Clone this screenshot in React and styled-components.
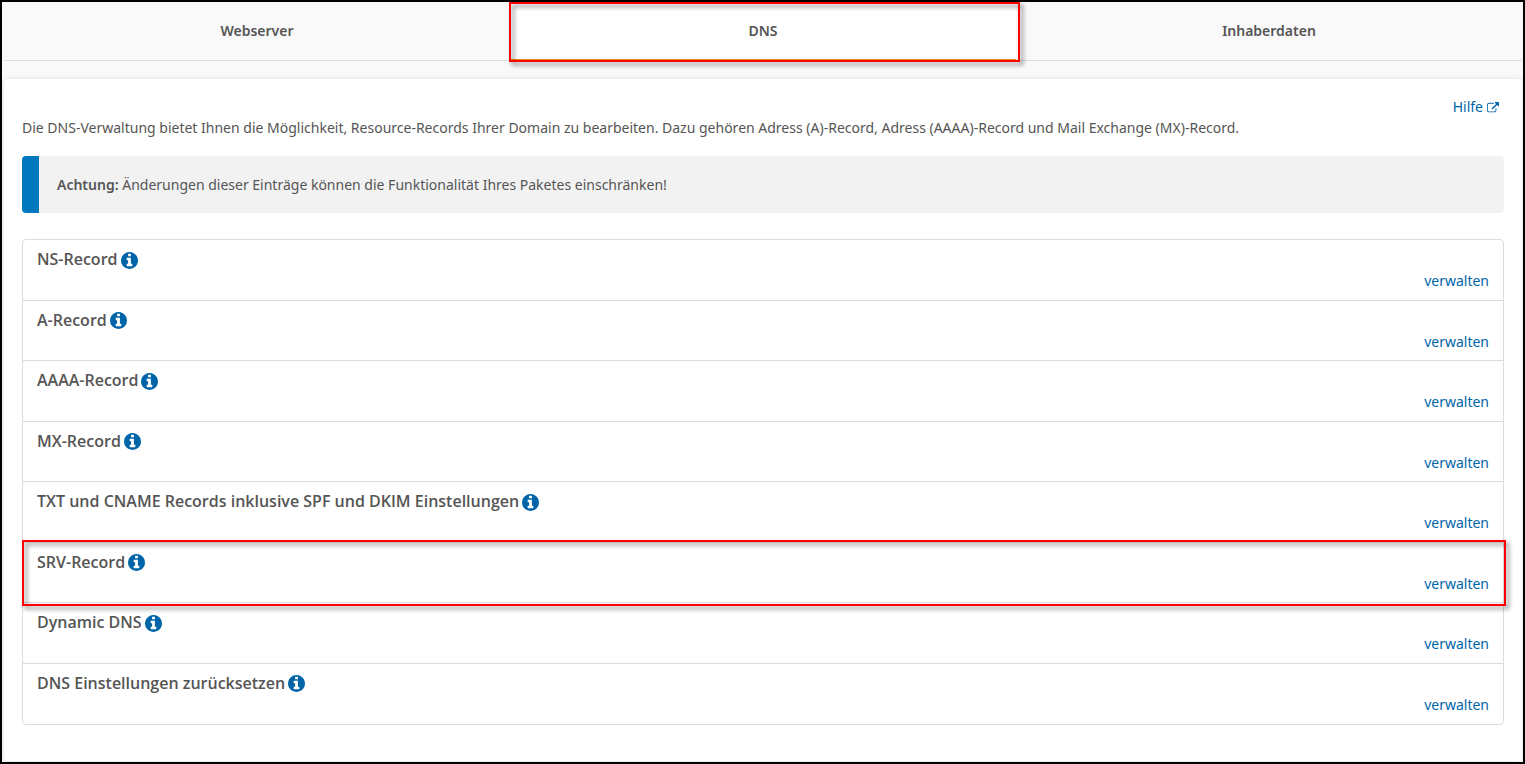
import React from 'react'
import styled, { createGlobalStyle } from 'styled-components'

const GlobalStyle = createGlobalStyle`
  * {
    box-sizing: border-box;
  }
  body {
    margin: 0;
    background-color: #f9f9f9;
    color: #555;
    font-family: 'Noto Sans', 'Open Sans', sans-serif;
    font-size: 14px;
    line-height: 21px;
  }
`

const Page = styled.div`
  display: flex;
  flex-direction: column;
  min-height: 100vh;
  padding: 0 1px 1px 2px;
  border: 2px solid #000;
`

const Tabs = styled.nav`
  display: flex;
  margin-bottom: 18px;
`

const Tab = styled.button`
  position: relative;
  flex: 1;
  padding: 18px 0 19px;
  border: 0;
  border-bottom: 1px solid #dcdcdc;
  background-color: ${props => (props.$active ? '#fff' : 'transparent')};
  box-shadow: ${props => (props.$active ? 'inset 0 -1px #e8920c' : 'none')};
  color: inherit;
  font: inherit;
  font-weight: 600;
  cursor: pointer;
`

const Highlight = styled.span`
  position: absolute;
  z-index: 1;
  top: ${props => props.$top}px;
  right: ${props => props.$right}px;
  bottom: ${props => props.$bottom}px;
  left: -1px;
  border: 2px solid #f00;
  filter: drop-shadow(3px 3px 2px rgba(0, 0, 0, 0.5));
  pointer-events: none;
`

const Panel = styled.main`
  flex: 1;
  padding: 17px 18px;
  border-radius: 4px;
  background-color: #fff;
  box-shadow: 0 0 6px rgba(0, 0, 0, 0.1);
`

const Link = styled.a`
  color: #0065a8;
  text-decoration: none;

  &:hover {
    text-decoration: underline;
  }
`

const Help = styled.div`
  display: flex;
  justify-content: flex-end;
  padding-right: 5px;

  svg {
    width: 12px;
    height: 12px;
    margin-left: 4px;
    vertical-align: -2px;
  }
`

const Intro = styled.p`
  margin: 0;
`

const Notice = styled.div`
  margin: 18px 0 26px;
  padding: 18px;
  border-left: 17px solid #0078be;
  border-radius: 4px;
  background-color: #f2f2f2;

  strong {
    font-weight: 600;
  }
`

const Records = styled.ul`
  display: grid;
  grid-auto-rows: 1fr;
  min-height: 486px;
  margin: 0;
  padding: 0;
  border: 1px solid #dcdcdc;
  border-radius: 4px;
  list-style: none;
`

const Record = styled.li`
  position: relative;
  display: flex;
  flex-direction: column;
  padding: 8px 14px;

  &:not(:last-child) {
    border-bottom: 1px solid #dcdcdc;
  }
`

const Title = styled.h2`
  display: flex;
  align-items: center;
  gap: 3px;
  margin: 0;
  font-family: 'Open Sans', 'Noto Sans', sans-serif;
  font-size: 16px;
  font-weight: 600;
  line-height: 22px;
`

const InfoButton = styled.button`
  display: flex;
  padding: 2px 0 0;
  border: 0;
  background: none;
  color: #0065a8;
  cursor: pointer;

  svg {
    width: 17px;
    height: 17px;
  }
`

const Manage = styled(Link)`
  align-self: flex-end;
`

const InfoIcon = () => (
  <svg viewBox='128 128 1536 1536' fill='currentColor' aria-hidden='true'>
    <path d='M1152 1376v-160q0-14-9-23t-23-9h-96v-512q0-14-9-23t-23-9h-320q-14 0-23 9t-9 23v160q0 14 9 23t23 9h96v320h-96q-14 0-23 9t-9 23v160q0 14 9 23t23 9h448q14 0 23-9t9-23zm-128-896v-160q0-14-9-23t-23-9h-192q-14 0-23 9t-9 23v160q0 14 9 23t23 9h192q14 0 23-9t9-23zm640 416q0 209-103 385.5t-279.5 279.5-385.5 103-385.5-103-279.5-279.5-103-385.5 103-385.5 279.5-279.5 385.5-103 385.5 103 279.5 279.5 103 385.5z' />
  </svg>
)

const ExternalIcon = () => (
  <svg viewBox='0 0 1792 1792' fill='currentColor' aria-hidden='true'>
    <path d='M1408 928v320q0 119-84.5 203.5t-203.5 84.5h-832q-119 0-203.5-84.5t-84.5-203.5v-832q0-119 84.5-203.5t203.5-84.5h704q14 0 23 9t9 23v64q0 14-9 23t-23 9h-704q-66 0-113 47t-47 113v832q0 66 47 113t113 47h832q66 0 113-47t47-113v-320q0-14 9-23t23-9h64q14 0 23 9t9 23zm384-864v512q0 26-19 45t-45 19-45-19l-176-176-652 652q-10 10-23 10t-23-10l-114-114q-10-10-10-23t10-23l652-652-176-176q-19-19-19-45t19-45 45-19h512q26 0 45 19t19 45z' />
  </svg>
)

const tabs = ['Webserver', 'DNS', 'Inhaberdaten']

const records = [
  'NS-Record',
  'A-Record',
  'AAAA-Record',
  'MX-Record',
  'TXT und CNAME Records inklusive SPF und DKIM Einstellungen',
  'SRV-Record',
  'Dynamic DNS',
  'DNS Einstellungen zurücksetzen'
]

function App () {
  return (
    <Page>
      <GlobalStyle />
      <Tabs>
        {tabs.map(tab => (
          <Tab key={tab} type='button' $active={tab === 'DNS'}>
            {tab}
            {tab === 'DNS' && <Highlight $top={0} $right={-4} $bottom={-2} />}
          </Tab>
        ))}
      </Tabs>
      <Panel>
        <Help>
          <Link href='#hilfe'>
            Hilfe
            <ExternalIcon />
          </Link>
        </Help>
        <Intro>
          Die DNS-Verwaltung bietet Ihnen die Möglichkeit, Resource-Records Ihrer Domain zu bearbeiten. Dazu gehören Adress (A)-Record, Adress (AAAA)-Record und Mail Exchange (MX)-Record.
        </Intro>
        <Notice>
          <strong>Achtung:</strong> Änderungen dieser Einträge können die Funktionalität Ihres Paketes einschränken!
        </Notice>
        <Records>
          {records.map(name => (
            <Record key={name}>
              <Title>
                {name}
                <InfoButton type='button' aria-label={`Info zu ${name}`}>
                  <InfoIcon />
                </InfoButton>
              </Title>
              <Manage href='#verwalten'>verwalten</Manage>
              {name === 'SRV-Record' && <Highlight $top={-3} $right={-3} $bottom={-4} />}
            </Record>
          ))}
        </Records>
      </Panel>
    </Page>
  )
}

export default App
